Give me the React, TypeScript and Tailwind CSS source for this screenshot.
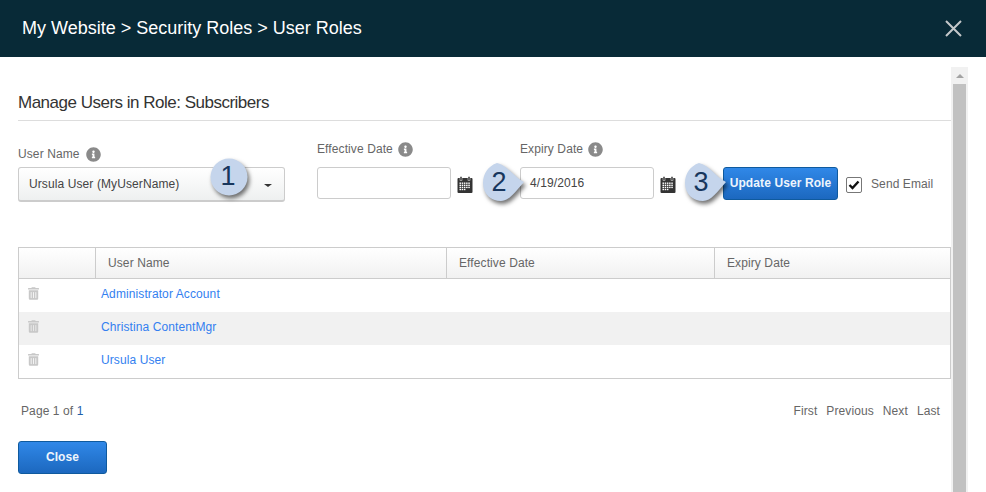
import React from "react";
import { FaInfoCircle, FaTrashAlt } from "react-icons/fa";

function Info() {
  return <FaInfoCircle className="text-[#8a8a8a] w-[15px] h-[15px] shrink-0 mt-[2px]" />;
}

function Calendar() {
  const cells: React.ReactNode[] = [];
  for (let r = 0; r < 4; r++) {
    for (let c = 0; c < 5; c++) {
      if (r === 3 && c > 2) continue;
      cells.push(<rect key={`${r}-${c}`} x={2.5 + c * 2.2} y={6.5 + r * 2.1} width="1.5" height="1.4" fill="#fff" />);
    }
  }
  return (
    <svg width="16" height="17" viewBox="0 0 16 17" className="shrink-0 mt-[9px]">
      <rect x="0.5" y="2" width="15" height="15" rx="1" fill="#333" />
      <rect x="3" y="0.5" width="2" height="4" fill="#333" stroke="#fff" strokeWidth="0.5" />
      <rect x="11" y="0.5" width="2" height="4" fill="#333" stroke="#fff" strokeWidth="0.5" />
      {cells}
    </svg>
  );
}

function Callout({ n, tail, className }: { n: string; tail: boolean; className: string }) {
  return (
    <div className={`absolute w-[50px] h-[44px] ${className}`}>
      <svg width="50" height="44" viewBox="0 0 50 44" className="absolute left-0 top-0 overflow-visible drop-shadow-[2px_3px_2px_rgba(0,0,0,0.55)]">
        {tail ? (
          <path d="M14 0 C 5 3 0 11 0 20 C 0 31 8 38 18 38 C 26 38 32 29 41 19 C 32 15 24 2 14 0 Z" fill="#c5d5ec" />
        ) : (
          <circle cx="19" cy="20" r="18.5" fill="#c5d5ec" />
        )}
      </svg>
      <span className={`absolute left-0 top-[4px] text-center text-[27px] leading-[30px] tracking-normal text-[#17365d] ${tail ? "w-[32px]" : "w-[36px]"}`}>{n}</span>
    </div>
  );
}

const rows = ["Administrator Account", "Christina ContentMgr", "Ursula User"];

export default function App() {
  return (
    <div className="relative w-[986px] h-[492px] overflow-hidden bg-white text-[12px] tracking-[0.1px] text-[#666] font-['Liberation_Sans',Arial,sans-serif]">
      <header className="h-[57px] bg-[#082a37] flex items-center justify-between pl-[22px] pr-[24px]">
        <h1 className="text-white text-[18px] leading-[22px] mb-[2px] tracking-normal">My Website &gt; Security Roles &gt; User Roles</h1>
        <svg width="17" height="17" viewBox="0 0 17 17" className="mb-[1px]">
          <path d="M1 1 L16 16 M16 1 L1 16" stroke="#c4c8ca" strokeWidth="2" />
        </svg>
      </header>

      <div className="flex h-[435px]">
        <main className="w-[951px] shrink-0 pl-[18px]">
          <h2 className="mt-[36px] h-[28px] text-[17px] leading-[20px] tracking-[-0.5px] text-[#333] border-b border-[#ddd]">
            Manage Users in Role: Subscribers
          </h2>

          <div className="flex items-start mt-[19px] h-[107px]">
            <div className="w-[267px] pt-[6px]">
              <div className="flex items-center gap-[6px] h-[15px]">
                <span>User Name</span>
                <Info />
              </div>
              <div className="mt-[6px] h-[35px] rounded-[3px] border border-[#ccc] border-b-[2px] bg-gradient-to-b from-white to-[#eef0f0] flex items-center justify-between pl-[10px] pr-[12px] text-[#444]">
                <span>Ursula User (MyUserName)</span>
                <span className="w-0 h-0 border-x-[4px] border-x-transparent border-t-[3px] border-t-[#333] mt-[2px]" />
              </div>
            </div>

            <div className="ml-[32px]">
              <div className="flex items-center gap-[5px] h-[15px] mb-[11px] mt-[1px]">
                <span>Effective Date</span>
                <Info />
              </div>
              <div className="flex items-start gap-[6px]">
                <div className="w-[134px] h-[32px] rounded-[3px] border border-[#ccc]" />
                <Calendar />
              </div>
            </div>

            <div className="ml-[47px]">
              <div className="flex items-center gap-[5px] h-[15px] mb-[11px] mt-[1px]">
                <span>Expiry Date</span>
                <Info />
              </div>
              <div className="flex items-start gap-[6px]">
                <div className="w-[134px] h-[32px] rounded-[3px] border border-[#ccc] flex items-center pl-[9px] text-[#444]">4/19/2016</div>
                <Calendar />
              </div>
            </div>

            <button className="ml-[47px] mt-[27px] w-[115px] h-[33px] pb-[2px] rounded-[3px] border border-[#0f5a9e] bg-gradient-to-b from-[#3088e8] to-[#1c68bf] text-[#eef5fc] font-bold text-[12px]">
              Update User Role
            </button>

            <div className="flex items-center mt-[35px] ml-[8px] gap-[9px]">
              <span className="w-[16px] h-[16px] rounded-[2px] border border-[#777] bg-white flex items-center justify-center">
                <svg width="12" height="10" viewBox="0 0 12 10">
                  <path d="M1.5 5 L4.5 8 L10.5 1.5" fill="none" stroke="#111" strokeWidth="2.4" />
                </svg>
              </span>
              <span className="mb-[2px]">Send Email</span>
            </div>
          </div>

          <div className="border border-[#ccc]">
            <div className="flex h-[31px] border-b border-[#ccc] bg-gradient-to-b from-white to-[#f1f1f1] leading-[30px]">
              <div className="w-[77px] border-r border-[#ccc]" />
              <div className="w-[351px] pl-[12px] border-r border-[#ccc]">User Name</div>
              <div className="w-[268px] pl-[12px] border-r border-[#ccc]">Effective Date</div>
              <div className="flex-1 pl-[12px]">Expiry Date</div>
            </div>
            {rows.map((r, i) => (
              <div key={r} className={`flex items-center h-[33px] ${i === 1 ? "bg-[#f1f1f1]" : "bg-white"}`}>
                <div className="w-[82px] pl-[9px]">
                  <FaTrashAlt className="text-[#c8c8c8] w-[11px] h-[13px] mb-[4px]" />
                </div>
                <a className="text-[#337ff0] mb-[4px]">{r}</a>
              </div>
            ))}
          </div>

          <div className="flex justify-between mt-[25px] pl-[3px] pr-[11px] h-[14px] leading-[14px]">
            <span>Page 1 of <span className="text-[#1f5fa8]">1</span></span>
            <div className="flex gap-[9px]">
              <span>First</span>
              <span>Previous</span>
              <span>Next</span>
              <span>Last</span>
            </div>
          </div>

          <button className="mt-[23px] w-[89px] h-[33px] pb-[2px] rounded-[3px] border border-[#0f5a9e] bg-gradient-to-b from-[#3088e8] to-[#1c68bf] text-[#eef5fc] font-bold text-[12px]">
            Close
          </button>
        </main>

        <div className="w-[17px] mt-[10px] bg-[#f1f1f1] flex flex-col items-center">
          <div className="h-[17px] flex items-center justify-center">
            <span className="w-0 h-0 border-x-[4px] border-x-transparent border-b-[4px] border-b-[#a3a3a3]" />
          </div>
          <div className="w-[13px] flex-1 bg-[#c1c1c1]" />
        </div>
      </div>

      <Callout n="1" tail={false} className="left-[210px] top-[157px]" />
      <Callout n="2" tail={true} className="left-[483px] top-[163px]" />
      <Callout n="3" tail={true} className="left-[685px] top-[163px]" />
    </div>
  );
}
